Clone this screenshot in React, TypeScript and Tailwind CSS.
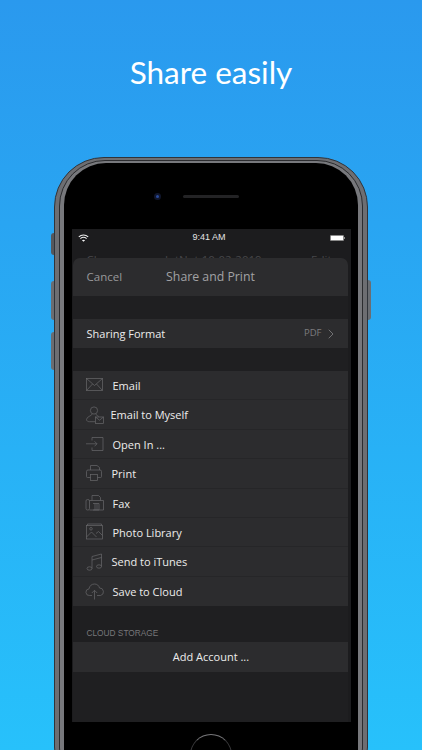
import * as React from "react"
import { ChevronRight } from "lucide-react"

const rowFont = { fontFamily: '"Open Sans", sans-serif' }

function IconBox({ children }: { children: React.ReactNode }) {
  return (
    <svg
      viewBox="0 0 20 20"
      className="size-[20px] shrink-0 text-[#69696b]"
      fill="none"
      stroke="currentColor"
      strokeWidth="0.7"
    >
      {children}
    </svg>
  )
}

const icons = {
  email: (
    <IconBox>
      <rect x="1.5" y="3.5" width="16" height="12" />
      <path d="M1.5 3.5l8 7 8-7M1.5 15.5l6-6.5M17.5 15.5l-6-6.5" />
    </IconBox>
  ),
  myself: (
    <IconBox>
      <circle cx="9" cy="5.500" r="3.600" />
      <path d="M7.200 9c0 1.800-5.700 2.500-5.700 5.500 0 1.500 1.500 2.200 3 2.200h5.500M10.800 9c.2 1 1.700 1.700 3 2.500" />
      <rect x="10.500" y="12" width="8" height="6.500" fill="#2c2c2e" />
      <path d="M10.500 12l4 3.200 4-3.200" />
    </IconBox>
  ),
  open: (
    <IconBox>
      <path d="M7 6.500V3.500h11v13H7v-3M1 9.800h11M9.500 7.300l2.500 2.500-2.500 2.500" />
    </IconBox>
  ),
  print: (
    <IconBox>
      <path d="M5.500 7V2.500h6.500l2.500 2V7M5.500 14.500h-3a1 1 0 01-1-1v-5A1.500 1.500 0 013 7h12a1.500 1.500 0 011.500 1.500v5a1 1 0 01-1 1h-3" />
      <rect x="5.500" y="11.500" width="7" height="6" />
    </IconBox>
  ),
  fax: (
    <IconBox>
      <rect x="1" y="6.500" width="3.500" height="10.500" rx="1.500" />
      <path d="M4.500 7.500H18.500V17H4.500" />
      <path d="M7 7.500V2.500h6.500l2 2v3M8 10.500h6V17H8M10 10.500V17M12 10.500V17" />
    </IconBox>
  ),
  photo: (
    <IconBox>
      <rect x="1.500" y="3.500" width="16" height="13.500" />
      <path d="M2.500 3.500V2h14v1.500M1.500 15l5-5 5 5M11 11.500l2.500-2 4 4" />
      <circle cx="6" cy="6.800" r="1.300" />
    </IconBox>
  ),
  music: (
    <IconBox>
      <ellipse cx="4.500" cy="16.500" rx="2.500" ry="1.700" />
      <ellipse cx="14" cy="14.500" rx="2.500" ry="1.700" />
      <path d="M7 16.500V4.500L16.500 2v12.500M7 8l9.500-2.500" />
    </IconBox>
  ),
  cloud: (
    <IconBox>
      <path d="M7 14.500H4.500a3.300 3.300 0 01-.5-6.600c.5-3 2.500-4.900 5.500-4.900 2.500 0 4.500 1.500 5 4a3.800 3.800 0 011 7.500H12" />
      <path d="M9.500 18.500V9.500M6.800 12l2.700-2.700 2.700 2.700" />
    </IconBox>
  ),
}

const rows = [
  { icon: icons.email, label: "Email", gap: "gap-[8px]" },
  { icon: icons.myself, label: "Email to Myself", gap: "gap-[6px]" },
  { icon: icons.open, label: "Open In ...", gap: "gap-[8px]" },
  { icon: icons.print, label: "Print", gap: "gap-[7px]" },
  { icon: icons.fax, label: "Fax", gap: "gap-[8px]" },
  { icon: icons.photo, label: "Photo Library", gap: "gap-[8px]" },
  { icon: icons.music, label: "Send to iTunes", gap: "gap-[7px]" },
  { icon: icons.cloud, label: "Save to Cloud", gap: "gap-[8px]" },
]

function StatusBar() {
  return (
    <div className="flex h-[15px] items-center justify-between px-[5px] text-[9px] text-[#e4e4e4]">
      <svg viewBox="0 0 12 9" className="h-[8px] w-[11px]" fill="none" stroke="#f0f0f0" strokeWidth="1.200">
        <path d="M.7 3.200c3-2.700 7.600-2.700 10.600 0M2.500 5.200c2-1.700 5-1.700 7 0" />
        <path d="M6 8.800L4.200 7c1-.8 2.600-.8 3.600 0z" fill="#f0f0f0" stroke="none" />
      </svg>
      <span className="font-['Liberation_Sans',sans-serif]">9:41 AM</span>
      <div className="flex items-center">
        <div className="h-[6px] w-[14px] rounded-[1px] border border-[#8a8a8a] bg-white" />
        <div className="h-[2px] w-px bg-[#8a8a8a]" />
      </div>
    </div>
  )
}

export default function App() {
  return (
    <div className="h-[750px] w-[422px] overflow-hidden bg-gradient-to-b from-[#2a99ee] to-[#27c1fb]">
      <h1 className="pt-[51px] text-center text-[31.500px] leading-[42px] text-white font-['Lato',sans-serif]">
        Share easily
      </h1>

      <div className="relative ml-[54px] mt-[64px] h-[640px] w-[314px]">
        {/* side buttons */}
        <div className="absolute -left-[3px] top-[76px] h-[22px] w-[3px] rounded-l-sm bg-[#55585d]" />
        <div className="absolute -left-[3px] top-[124px] h-[39px] w-[3px] rounded-l-sm bg-[#6a6d72]" />
        <div className="absolute -left-[3px] top-[175px] h-[38px] w-[3px] rounded-l-sm bg-[#6a6d72]" />
        <div className="absolute -right-[3px] top-[123px] h-[40px] w-[3px] rounded-r-sm bg-[#6a6d72]" />

        <div className="h-full rounded-[50px] border border-[#30343a] bg-[#6d6e72] px-[4px] py-[2px]">
          <div className="h-full rounded-[46px] border border-[#2b2c2f] bg-[#77787c] px-[4px] py-[2px]">
            <div className="flex h-full flex-col items-center rounded-[42px] bg-black px-[6px]">
              <div className="flex h-[66px] w-full shrink-0 items-center justify-center gap-[22px] pr-[29px]">
                <div className="flex size-[7px] items-center justify-center rounded-full bg-[#10162c]">
                  <div className="size-[3px] rounded-full bg-[#2a4a9a]" />
                </div>
                <div className="h-[3px] w-[56px] rounded-full bg-[#232325]" />
              </div>

              <div className="flex h-[493px] w-[279px] shrink-0 flex-col bg-[#1c1c1e] px-[1px]" style={rowFont}>
                <div className="pt-[1px]">
                  <StatusBar />
                </div>
                <div className="flex h-[13px] items-end justify-between overflow-hidden pl-[14px] pr-[18px] text-[11.500px] leading-[10px] text-[#47474a]">
                  <span className="translate-y-[7px]">Close</span>
                  <span className="translate-y-[7px]">JotNot 10-02-2019</span>
                  <span className="translate-y-[7px]">Edit</span>
                </div>

                <div className="flex min-h-0 w-[275px] flex-1 flex-col rounded-t-[7px] bg-[#1f1f21]">
                  <div className="relative flex h-[38px] shrink-0 items-center justify-center rounded-t-[7px] bg-[#2c2c2e] pl-[1px]">
                    <span className="absolute left-[14px] text-[11.500px] text-[#98989a]">Cancel</span>
                    <span className="text-[12.300px] text-[#a2a2a4]">Share and Print</span>
                  </div>

                  <div className="mt-[23px] flex h-[29px] shrink-0 items-center justify-between bg-[#2c2c2e] pl-[14px] pr-[9px]">
                    <span className="mt-[2px] text-[11px] font-medium text-[#ececec]">Sharing Format</span>
                    <span className="flex items-center gap-[1px] text-[9.500px] text-[#7c7c7e]">
                      PDF
                      <ChevronRight className="size-[16px] text-[#7c7c7e]" strokeWidth={1.300} />
                    </span>
                  </div>

                  <div className="mt-[23px] flex shrink-0 flex-col bg-[#2c2c2e]">
                    {rows.map((row, i) => (
                      <div
                        key={row.label}
                        className={
                          "flex h-[29.400px] items-center pl-[12px] " +
                          row.gap +
                          (i < rows.length - 1 ? " border-b border-[#262628]" : "")
                        }
                      >
                        {row.icon}
                        <span className="mt-[2px] text-[11px] font-medium text-[#ececec]">{row.label}</span>
                      </div>
                    ))}
                  </div>

                  <div className="mt-[23px] h-[13px] shrink-0 pl-[14px] text-[8.300px] leading-[8px] text-[#77777a] font-['Liberation_Sans',sans-serif]">
                    CLOUD STORAGE
                  </div>
                  <div className="flex h-[30px] shrink-0 items-center justify-center bg-[#2c2c2e] pl-[2px] text-[11px] font-medium text-[#ececec]">
                    Add Account ...
                  </div>
                </div>
              </div>

              <div className="mt-[12px] size-[42px] shrink-0 rounded-full border border-[#3a3a3c] border-t-[#77777a]" />
            </div>
          </div>
        </div>
      </div>
    </div>
  )
}
